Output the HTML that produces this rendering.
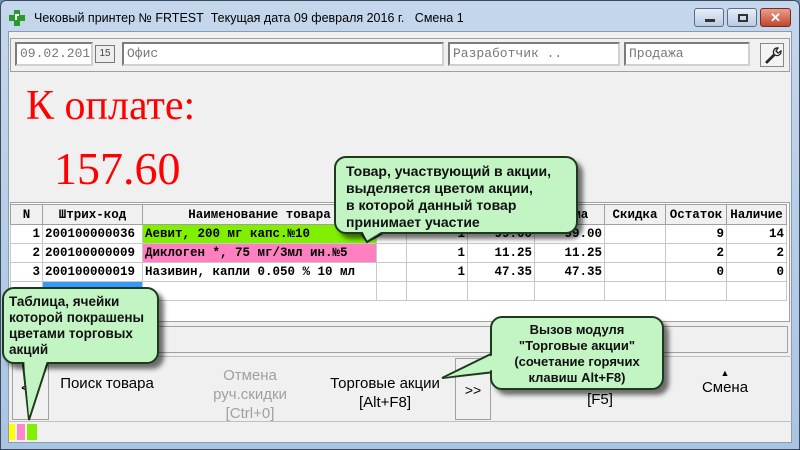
<!DOCTYPE html><html><head><meta charset="utf-8"><style>
*{margin:0;padding:0;box-sizing:border-box}
body{width:800px;height:450px;overflow:hidden;background:#6d8fb5;font-family:"Liberation Sans",sans-serif;position:relative}
.a{position:absolute}
.win{left:0;top:0;width:800px;height:450px;background:linear-gradient(#c5d7ec,#a9c4e2);border:1px solid #3b4a5c;border-radius:6px 6px 0 0}
.client{left:8px;top:31px;width:784px;height:412px;background:#f0f0f0;border:1px solid #8a9cb0}
.fld{background:#fff;border:2px inset #d0d0d0;font-family:"Liberation Mono",monospace;font-size:13px;color:#777;padding:2px 3px;height:24px}
table{border-collapse:collapse;position:absolute;left:10px;top:204px;background:#fff}
td{border:1px solid #c8c8c8;height:19px;padding:0 2px;font-family:"Liberation Mono",monospace;font-size:12.5px;font-weight:bold;white-space:nowrap;overflow:hidden}
th{border:1px solid #a0a0a0;background:#f0f0f0;height:20px;font-family:"Liberation Mono",monospace;font-size:12.5px;font-weight:bold}
.r{text-align:right}
.btn{font-family:"Liberation Sans Narrow","Liberation Sans",sans-serif;font-size:15px;text-align:center;color:#000;line-height:19px}
.call{background:#c3f4c3;border:2px solid #1d3a1d;border-radius:12px;box-shadow:5px 5px 5px rgba(0,0,0,.55);font-family:"Liberation Sans",sans-serif;font-weight:bold;font-size:14px;line-height:17px;color:#111;white-space:nowrap}
.wb{top:8px;height:19px;border:1px solid #5a6e86;border-radius:3px;background:linear-gradient(#e6eef8,#b9cbe2)}
</style></head><body>
<div class="a win"></div>
<div class="a" style="left:9px;top:10px;width:16px;height:16px"><svg width="16" height="16"><path d="M5 0h6v5h5v6h-5v5h-6v-5h-5v-6h5z" fill="#2a9a2a"/><path d="M6 4h4v2h-2v4h-2z" fill="#fff"/></svg></div>
<div class="a" style="left:34px;top:11px;font-size:12.5px;color:#000">Чековый принтер № FRTEST&nbsp; Текущая дата 09 февраля 2016 г.&nbsp;&nbsp; Смена 1</div>
<div class="a wb" style="left:694px;width:30px"><div class="a" style="left:10px;top:10px;width:10px;height:3px;background:#333"></div></div>
<div class="a wb" style="left:727px;width:30px"><div class="a" style="left:10px;top:5px;width:10px;height:8px;border:2px solid #333"></div></div>
<div class="a wb" style="left:760px;width:31px;background:linear-gradient(#e8a08c,#c0462e);border-color:#7a2a20;color:#fff;font-weight:bold;text-align:center;font-size:13px;line-height:17px">✕</div>
<div class="a client"></div>
<div class="a" style="left:10px;top:38px;width:780px;height:34px;border:1px solid #a0a0a0"></div>
<div class="a fld" style="left:15px;top:42px;width:78px">09.02.201</div>
<div class="a" style="left:95px;top:45px;width:20px;height:18px;border:1px solid #777;background:#eee;font-size:10px;text-align:center;line-height:16px;color:#444">15</div>
<div class="a fld" style="left:122px;top:42px;width:322px">Офис</div>
<div class="a fld" style="left:448px;top:42px;width:172px">Разработчик ..</div>
<div class="a fld" style="left:624px;top:42px;width:126px">Продажа</div>
<div class="a" style="left:760px;top:43px;width:24px;height:24px;border:1px solid #888;background:#f4f4f4"><svg width="22" height="22"><path d="M5 18l8-8a4 4 0 0 1 4-6l-2 3 2 2 3-2a4 4 0 0 1-6 4l-8 8z" fill="none" stroke="#222" stroke-width="1.3"/></svg></div>
<div class="a" style="left:26px;top:82px;font-family:'Liberation Serif',serif;font-size:42px;color:#f00">К оплате:</div>
<div class="a" style="left:54px;top:142px;font-family:'Liberation Serif',serif;font-size:46px;color:#f00">157.60</div>
<div class="a" style="left:10px;top:202px;width:780px;height:120px;background:#fff;border:1px solid #a0a0a0"></div>
<table>
<tr><th style="width:32px">N</th><th style="width:100px">Штрих-код</th><th style="width:234px">Наименование товара</th><th style="width:30px"></th><th style="width:61px"></th><th style="width:67px"></th><th style="width:70px">Сумма</th><th style="width:61px">Скидка</th><th style="width:61px">Остаток</th><th style="width:60px">Наличие</th></tr>
<tr><td class="r">1</td><td>200100000036</td><td style="background:#80f000">Аевит, 200 мг капс.№10</td><td></td><td class="r">1</td><td class="r">99.00</td><td class="r">99.00</td><td></td><td class="r">9</td><td class="r">14</td></tr>
<tr><td class="r">2</td><td>200100000009</td><td style="background:#ff80c0">Диклоген *, 75 мг/3мл ин.№5</td><td></td><td class="r">1</td><td class="r">11.25</td><td class="r">11.25</td><td></td><td class="r">2</td><td class="r">2</td></tr>
<tr><td class="r">3</td><td>200100000019</td><td>Називин, капли 0.050 % 10 мл</td><td></td><td class="r">1</td><td class="r">47.35</td><td class="r">47.35</td><td></td><td class="r">0</td><td class="r">0</td></tr>
<tr><td></td><td style="background:#3399ff"></td><td></td><td></td><td></td><td></td><td></td><td></td><td></td><td></td></tr>
</table>
<div class="a" style="left:10px;top:326px;width:778px;height:27px;border:1px solid #a0a0a0;background:#f0f0f0"></div>
<div class="a" style="left:8px;top:356px;width:784px;height:1px;background:#c0c0c0"></div>
<div class="a" style="left:12px;top:358px;width:37px;height:62px;border:1px solid #a0a0a0;font-size:16px;line-height:60px;padding-left:8px">&lt;</div>
<div class="a btn" style="left:52px;top:374px;width:110px">Поиск товара</div>
<div class="a btn" style="left:185px;top:366px;width:130px;color:#a0a0a0">Отмена<br>руч.скидки<br>[Ctrl+0]</div>
<div class="a btn" style="left:310px;top:374px;width:150px">Торговые акции<br>[Alt+F8]</div>
<div class="a" style="left:455px;top:358px;width:36px;height:62px;border:1px solid #a0a0a0;font-size:14px;line-height:62px;text-align:center">&gt;&gt;</div>
<div class="a btn" style="left:560px;top:390px;width:80px">[F5]</div>
<div class="a btn" style="left:680px;top:364px;width:90px;font-size:9px">▲</div>
<div class="a btn" style="left:680px;top:378px;width:90px">Смена</div>
<div class="a" style="left:8px;top:421px;width:784px;height:1px;background:#c0c0c0"></div>
<div class="a" style="left:9px;top:424px;width:6px;height:16px;background:#ffff00"></div>
<div class="a" style="left:17px;top:424px;width:8px;height:16px;background:#ff88cc"></div>
<div class="a" style="left:27px;top:424px;width:10px;height:16px;background:#80f000"></div>
<!-- pointers -->
<svg class="a" style="left:0;top:0" width="800" height="450">
<polygon points="358,228 392,228 367,242" fill="#c3f4c3" stroke="#1d3a1d" stroke-width="2"/>
<polygon points="22,355 50,355 29,420" fill="#c3f4c3" stroke="#1d3a1d" stroke-width="2"/>
<polygon points="495,352 495,372 442,378" fill="#c3f4c3" stroke="#1d3a1d" stroke-width="2"/>
</svg>
<div class="a call" style="left:334px;top:156px;width:244px;height:78px;padding:5px 10px">Товар, участвующий в акции,<br>выделяется цветом акции,<br>в которой данный товар<br>принимает участие</div>
<div class="a call" style="left:2px;top:287px;width:157px;height:77px;padding:5px 5px;font-size:13.5px;line-height:16px">Таблица, ячейки<br>которой покрашены<br>цветами торговых<br>акций</div>
<div class="a call" style="left:490px;top:316px;width:174px;height:74px;padding:4px 4px;text-align:center;font-size:13px;line-height:16px">Вызов модуля<br>"Торговые акции"<br>(сочетание горячих<br>клавиш Alt+F8)</div>
<svg class="a" style="left:0;top:0" width="800" height="450">
<polygon points="360,227 390,227 367,240" fill="#c3f4c3"/>
<polygon points="24,358 48,358 29,416" fill="#c3f4c3"/>
<polygon points="493,355 493,370 446,377" fill="#c3f4c3"/>
</svg>
</body></html>
